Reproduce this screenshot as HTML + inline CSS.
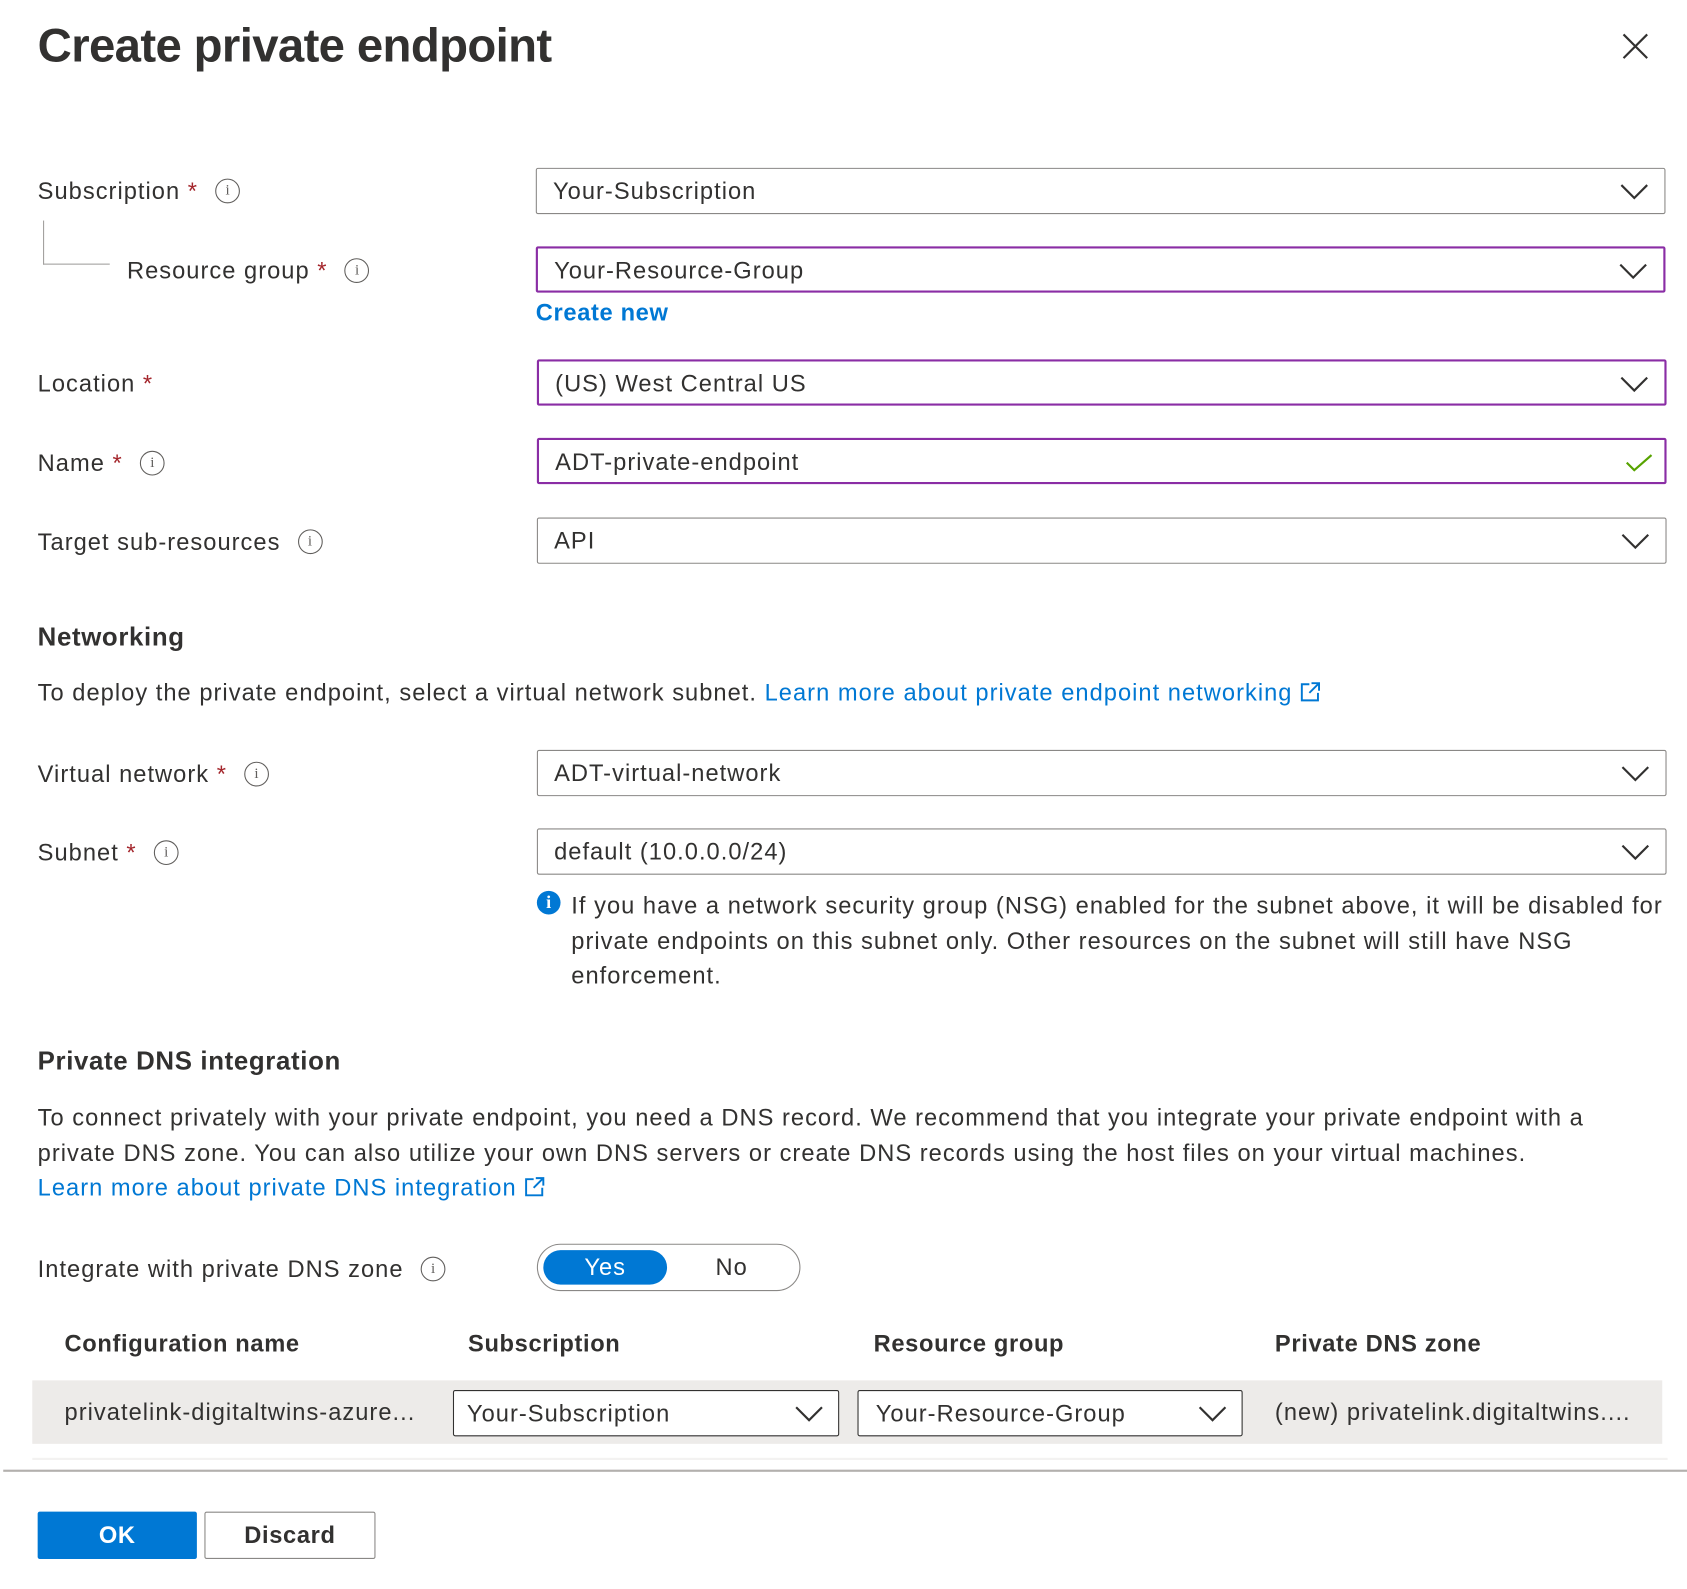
<!DOCTYPE html>
<html><head><meta charset="utf-8"><style>
html,body{margin:0;padding:0;background:#fff;width:1687px;height:1589px;overflow:hidden}
#w{position:absolute;left:0;top:0;width:1568px;height:1477px;transform:scale(1.07589);transform-origin:0 0;font-family:"Liberation Sans",sans-serif;color:#323130;font-size:22px;letter-spacing:0.95px}
.a{position:absolute;white-space:nowrap;line-height:30px}
.r{color:#a4262c}
.i{display:inline-block;width:21px;height:21px;border:1.5px solid #605e5c;border-radius:50%;font-size:14px;line-height:21px;text-align:center;vertical-align:middle;box-sizing:content-box;margin-left:16px;position:relative;top:-2px;font-family:"Liberation Serif",serif;color:#605e5c;letter-spacing:0}
.box{position:absolute;box-sizing:border-box;border:1.5px solid #8a8886;border-radius:2px;height:43px;background:#fff}
.box.p{border:2px solid #8a2da5}
.box span{position:absolute;left:15px;top:6px;line-height:30px;white-space:nowrap}
.box svg{position:absolute;right:15px;top:13px}
.l{color:#0078d4}
.b{font-weight:bold;letter-spacing:0.6px}
</style></head><body><div id="w">
<div class="a" style="left:35px;top:16px;font-size:44px;line-height:54px;font-weight:bold;color:#323130;letter-spacing:-0.6px">Create private endpoint</div>
<svg class="a" style="left:1508px;top:31px" width="24" height="24"><path d="M1 1L23 23M23 1L1 23" stroke="#323130" stroke-width="2"/></svg>

<div class="a" style="left:35px;top:163px">Subscription <span class="r">*</span><span class="i">i</span></div>
<div class="box" style="left:498px;top:156px;width:1050px"><span>Your-Subscription</span><svg width="26" height="16"><path d="M1 2L13 14L25 2" fill="none" stroke="#323130" stroke-width="2"/></svg></div>
<div style="position:absolute;left:40px;top:205px;width:61px;height:40px;border-left:1.5px solid #a19f9d;border-bottom:1.5px solid #a19f9d"></div>
<div class="a" style="left:118px;top:237px">Resource group <span class="r">*</span><span class="i">i</span></div>
<div class="box p" style="left:498px;top:229px;width:1050px"><span>Your-Resource-Group</span><svg width="26" height="16"><path d="M1 2L13 14L25 2" fill="none" stroke="#323130" stroke-width="2"/></svg></div>
<div class="a l b" style="left:498px;top:276px">Create new</div>

<div class="a" style="left:35px;top:342px">Location <span class="r">*</span></div>
<div class="box p" style="left:499px;top:334px;width:1050px"><span>(US) West Central US</span><svg width="26" height="16"><path d="M1 2L13 14L25 2" fill="none" stroke="#323130" stroke-width="2"/></svg></div>

<div class="a" style="left:35px;top:416px">Name <span class="r">*</span><span class="i">i</span></div>
<div class="box p" style="left:499px;top:407px;width:1050px"><span>ADT-private-endpoint</span><svg width="26" height="18" style="top:12px;right:10px"><path d="M1 9L8 16L24 2" fill="none" stroke="#57a300" stroke-width="2"/></svg></div>

<div class="a" style="left:35px;top:489px">Target sub-resources<span class="i">i</span></div>
<div class="box" style="left:499px;top:481px;width:1050px"><span>API</span><svg width="26" height="16"><path d="M1 2L13 14L25 2" fill="none" stroke="#323130" stroke-width="2"/></svg></div>

<div class="a b" style="left:35px;top:578px;font-size:24px">Networking</div>
<div class="a" style="left:35px;top:629px">To deploy the private endpoint, select a virtual network subnet. <span class="l">Learn more about private endpoint networking</span> <svg width="20" height="20" style="vertical-align:-2px"><path d="M9 3H2V18H17V11M11 2H18V9M18 2L9 11" fill="none" stroke="#0078d4" stroke-width="1.8"/></svg></div>

<div class="a" style="left:35px;top:705px">Virtual network <span class="r">*</span><span class="i">i</span></div>
<div class="box" style="left:499px;top:697px;width:1050px"><span>ADT-virtual-network</span><svg width="26" height="16"><path d="M1 2L13 14L25 2" fill="none" stroke="#323130" stroke-width="2"/></svg></div>
<div class="a" style="left:35px;top:778px">Subnet <span class="r">*</span><span class="i">i</span></div>
<div class="box" style="left:499px;top:770px;width:1050px"><span>default (10.0.0.0/24)</span><svg width="26" height="16"><path d="M1 2L13 14L25 2" fill="none" stroke="#323130" stroke-width="2"/></svg></div>
<div style="position:absolute;left:499px;top:828px;width:22px;height:22px;border-radius:50%;background:#0078d4;color:#fff;font-weight:bold;font-size:17px;line-height:22px;text-align:center;font-family:'Liberation Serif',serif;letter-spacing:0">i</div>
<div style="position:absolute;left:531px;top:826px;width:1020px;line-height:32.5px">If you have a network security group (NSG) enabled for the subnet above, it will be disabled for private endpoints on this subnet only. Other resources on the subnet will still have NSG enforcement.</div>

<div class="a b" style="left:35px;top:972px;font-size:24px">Private DNS integration</div>
<div style="position:absolute;left:35px;top:1023px;width:1515px;line-height:32.5px">To connect privately with your private endpoint, you need a DNS record. We recommend that you integrate your private endpoint with a private DNS zone. You can also utilize your own DNS servers or create DNS records using the host files on your virtual machines.<br><span class="l">Learn more about private DNS integration</span> <svg width="20" height="20" style="vertical-align:-2px"><path d="M9 3H2V18H17V11M11 2H18V9M18 2L9 11" fill="none" stroke="#0078d4" stroke-width="1.8"/></svg></div>

<div class="a" style="left:35px;top:1165px">Integrate with private DNS zone<span class="i">i</span></div>
<div style="position:absolute;left:499px;top:1156px;width:245px;height:44px;box-sizing:border-box;border:1.5px solid #8a8886;border-radius:22px"></div>
<div style="position:absolute;left:505px;top:1162px;width:115px;height:32px;border-radius:16px;background:#0078d4;color:#fff;text-align:center;line-height:32px">Yes</div>
<div class="a" style="left:665px;top:1163px">No</div>

<div class="a b" style="left:60px;top:1234px">Configuration name</div>
<div class="a b" style="left:435px;top:1234px">Subscription</div>
<div class="a b" style="left:812px;top:1234px">Resource group</div>
<div class="a b" style="left:1185px;top:1234px">Private DNS zone</div>
<div style="position:absolute;left:30px;top:1283px;width:1515px;height:59px;background:#edebe9"></div>
<div class="a" style="left:60px;top:1298px">privatelink-digitaltwins-azure...</div>
<div class="box" style="left:421px;top:1292px;width:359px;border-color:#323130;height:43px"><span style="left:12px">Your-Subscription</span><svg width="26" height="16" style="right:14px"><path d="M1 2L13 14L25 2" fill="none" stroke="#323130" stroke-width="2"/></svg></div>
<div class="box" style="left:797px;top:1292px;width:358px;border-color:#323130;height:43px"><span style="left:16px">Your-Resource-Group</span><svg width="26" height="16" style="right:14px"><path d="M1 2L13 14L25 2" fill="none" stroke="#323130" stroke-width="2"/></svg></div>
<div class="a" style="left:1185px;top:1298px">(new) privatelink.digitaltwins....</div>
<div style="position:absolute;left:30px;top:1355px;width:1520px;height:2px;background:#f3f2f1"></div>
<div style="position:absolute;left:3px;top:1366px;width:1565px;height:2px;background:#b3b0ad"></div>

<div class="b" style="position:absolute;left:35px;top:1405px;width:148px;height:44px;background:#0078d4;border-radius:2px;color:#fff;text-align:center;line-height:44px">OK</div>
<div class="b" style="position:absolute;left:190px;top:1405px;width:159px;height:44px;box-sizing:border-box;border:1.5px solid #8a8886;border-radius:2px;text-align:center;line-height:41px">Discard</div>
</div></body></html>
